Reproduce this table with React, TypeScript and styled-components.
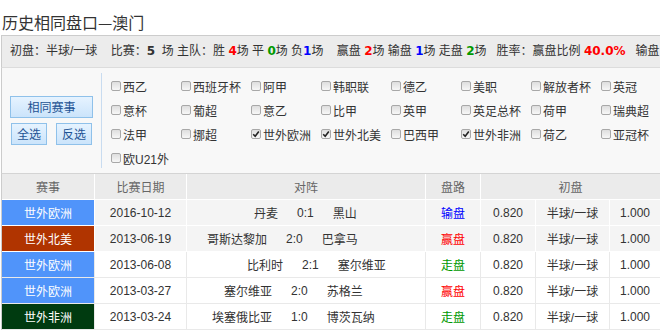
import React from 'react';
import styled, { createGlobalStyle } from 'styled-components';

const Global = createGlobalStyle`
  html, body { margin: 0; padding: 0; background: #fff; }
  body {
    font-family: "Liberation Sans", "Noto Sans CJK SC", sans-serif;
    font-size: 12px;
    color: #333;
    overflow: hidden;
  }
`;

const Page = styled.div`
  width: 660px;
  overflow: hidden;
`;

const Title = styled.h2`
  margin: 0;
  padding: 10px 0 0 2px;
  font-size: 16px;
  line-height: 24px;
  font-weight: normal;
  color: #333;
  font-family: "Noto Sans CJK SC", sans-serif;
`;

const Summary = styled.div`
  margin: 1px 0 0 1px;
  height: 31px;
  line-height: 31px;
  border-top: 1px solid #cccccc;
  border-bottom: 1px solid #dcdcdc;
  border-left: 1px solid #cccccc;
  background: #ececec;
  white-space: pre;
  overflow: hidden;
  padding-left: 8px;
`;

const Num = styled.b<{ $c: string }>`
  font-family: "DejaVu Sans", sans-serif;
  font-weight: bold;
  color: ${(p) => p.$c};
`;

const Filter = styled.div`
  display: flex;
  margin-left: 1px;
  border-left: 1px solid #cccccc;
  background: #f8f8f8;
  height: 105px;
  overflow: hidden;
`;

const LeftCol = styled.div`
  flex: none;
  width: 99px;
  margin: 5px 0;
  border-right: 1px solid #c9dcf0;
  display: flex;
  flex-direction: column;
  align-items: center;
  justify-content: center;
  gap: 5px;
`;

const BtnRow = styled.div`
  display: flex;
  gap: 9px;
`;

const Btn = styled.button<{ $w: number }>`
  width: ${(p) => p.$w}px;
  height: 22px;
  padding: 0;
  margin: 0;
  border: 1px solid #8fc1ea;
  border-radius: 0;
  background: linear-gradient(#e6f3ff, #cbe4fb);
  color: #1e5394;
  font-family: "Noto Sans CJK SC", sans-serif;
  font-size: 12px;
  line-height: 20px;
  cursor: pointer;
`;

const Opts = styled.div`
  flex: none;
  margin-left: 8px;
  padding-top: 6px;
  display: grid;
  grid-template-columns: repeat(8, 70px);
  grid-auto-rows: 24px;
  align-content: start;
`;

const Opt = styled.label`
  display: flex;
  align-items: center;
  white-space: nowrap;
  color: #333;
  font-size: 12px;
`;

const Box = styled.span`
  width: 10px;
  height: 10px;
  box-sizing: border-box;
  margin: 0 2px 0 1px;
  border: 1px solid #a8a8a8;
  border-radius: 2px;
  background: linear-gradient(#dedede, #f7f7f7);
  display: flex;
  align-items: center;
  justify-content: center;
`;

const Table = styled.div`
  margin-left: 1px;
  border-left: 1px solid #cccccc;
  border-top: 1px solid #d4d4d4;
`;

const COLS = '92px 91px 238px 54px 54px 73px 1fr';

const Row = styled.div<{ $line: string }>`
  display: grid;
  grid-template-columns: ${COLS};
  column-gap: 1px;
  background: ${(p) => p.$line};
  border-bottom: 1px solid ${(p) => p.$line};
`;

const Head = styled.div<{ $span?: number }>`
  height: 25px;
  background: #ebebeb;
  color: #666;
  display: flex;
  align-items: center;
  justify-content: center;
  ${(p) => (p.$span ? `grid-column: span ${p.$span};` : '')}
`;

const Cell = styled.div<{ $bg: string }>`
  height: 25px;
  background: ${(p) => p.$bg};
  display: flex;
  align-items: center;
  justify-content: center;
  white-space: nowrap;
  color: #333;
`;

const League = styled(Cell)`
  color: #fff;
`;

const VsCell = styled(Cell)`
  justify-content: flex-start;
`;

const Home = styled.span<{ $w: number }>`
  width: ${(p) => p.$w}px;
  text-align: right;
  flex: none;
`;

const Score = styled.span`
  margin: 0 19px;
`;

const Result = styled.span<{ $c: string }>`
  color: ${(p) => p.$c};
`;

const options: [string, boolean][] = [
  ['西乙', false], ['西班牙杯', false], ['阿甲', false], ['韩职联', false],
  ['德乙', false], ['美职', false], ['解放者杯', false], ['英冠', false],
  ['意杯', false], ['葡超', false], ['意乙', false], ['比甲', false],
  ['英甲', false], ['英足总杯', false], ['荷甲', false], ['瑞典超', false],
  ['法甲', false], ['挪超', false], ['世外欧洲', true], ['世外北美', true],
  ['巴西甲', false], ['世外非洲', true], ['荷乙', false], ['亚冠杯', false],
  ['欧U21外', false],
];

const RED = '#ff0000';
const BLUE = '#0000ff';
const GREEN = '#009900';

const rows = [
  { lg: '世外欧洲', lc: '#5094fa', date: '2016-10-12', home: '丹麦', hw: 91, score: '0:1', away: '黑山', res: '输盘', rc: BLUE },
  { lg: '世外北美', lc: '#b03400', date: '2013-06-19', home: '哥斯达黎加', hw: 80, score: '2:0', away: '巴拿马', res: '赢盘', rc: RED },
  { lg: '世外欧洲', lc: '#5094fa', date: '2013-06-08', home: '比利时', hw: 96, score: '2:1', away: '塞尔维亚', res: '走盘', rc: GREEN },
  { lg: '世外欧洲', lc: '#5094fa', date: '2013-03-27', home: '塞尔维亚', hw: 85, score: '2:0', away: '苏格兰', res: '赢盘', rc: RED },
  { lg: '世外非洲', lc: '#003b10', date: '2013-03-24', home: '埃塞俄比亚', hw: 85, score: '1:0', away: '博茨瓦纳', res: '走盘', rc: GREEN },
];

const Check = () => (
  <svg width="8" height="8" viewBox="0 0 8 8">
    <path d="M1.2 4.2 L3.2 6.2 L6.8 1.6" fill="none" stroke="#222" strokeWidth="1.6" />
  </svg>
);

export default function App() {
  return (
    <Page>
      <Global />
      <Title>历史相同盘口—澳门</Title>
      <Summary>
        {'初盘：半球/一球    比赛：'}<Num $c="#333">5</Num>{'  场 主队：胜 '}
        <Num $c={RED}>4</Num>{'场 平 '}<Num $c={GREEN}>0</Num>{'场 负'}
        <Num $c={BLUE}>1</Num>{'场    赢盘 '}<Num $c={RED}>2</Num>{'场 输盘 '}
        <Num $c={BLUE}>1</Num>{'场 走盘 '}<Num $c={GREEN}>2</Num>{'场   胜率：赢盘比例 '}
        <Num $c={RED}>40.0%</Num>{'   输盘'}
      </Summary>
      <Filter>
        <LeftCol>
          <Btn $w={83}>相同赛事</Btn>
          <BtnRow>
            <Btn $w={36}>全选</Btn>
            <Btn $w={36}>反选</Btn>
          </BtnRow>
        </LeftCol>
        <Opts>
          {options.map(([name, on]) => (
            <Opt key={name}>
              <Box>{on && <Check />}</Box>
              {name}
            </Opt>
          ))}
        </Opts>
      </Filter>
      <Table>
        <Row $line="#ffffff">
          <Head>赛事</Head>
          <Head>比赛日期</Head>
          <Head>对阵</Head>
          <Head>盘路</Head>
          <Head $span={3}>初盘</Head>
        </Row>
        {rows.map((r, i) => {
          const bg = i < 2 ? '#f4f4f4' : '#ffffff';
          const line = i < 2 ? '#ffffff' : '#e9e9e9';
          return (
            <Row key={i} $line={line}>
              <League $bg={r.lc}>{r.lg}</League>
              <Cell $bg={bg}>{r.date}</Cell>
              <VsCell $bg={bg}>
                <Home $w={r.hw}>{r.home}</Home>
                <Score>{r.score}</Score>
                <span>{r.away}</span>
              </VsCell>
              <Cell $bg={bg}><Result $c={r.rc}>{r.res}</Result></Cell>
              <Cell $bg={bg}>0.820</Cell>
              <Cell $bg={bg}>半球/一球</Cell>
              <Cell $bg={bg}>1.000</Cell>
            </Row>
          );
        })}
      </Table>
    </Page>
  );
}
